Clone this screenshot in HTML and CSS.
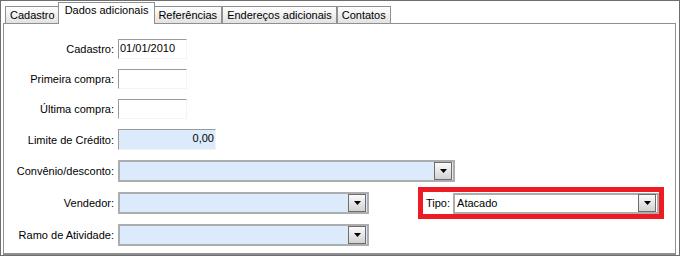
FILE: index.html
```html
<!DOCTYPE html>
<html lang="pt-BR">

<head>
  <meta charset="UTF-8">
  <meta name="viewport" content="width=device-width, initial-scale=1.0">
  <title>Dados adicionais</title>
  <link rel="stylesheet" href="styles.css">
</head>

<body>
  <div class="window">
    <div class="tabs">
      <div class="tab">Cadastro</div>
      <div class="tab active">Dados adicionais</div>
      <div class="tab">Referências</div>
      <div class="tab">Endereços adicionais</div>
      <div class="tab">Contatos</div>
    </div>

    <div class="panel">
      <div class="form">
        <div class="row">
          <label class="label">Cadastro:</label>
          <div class="edit">01/01/2010</div>
        </div>
        <div class="row">
          <label class="label">Primeira compra:</label>
          <div class="edit"></div>
        </div>
        <div class="row">
          <label class="label">Última compra:</label>
          <div class="edit"></div>
        </div>
        <div class="row row-money">
          <label class="label">Limite de Crédito:</label>
          <div class="edit money">0,00</div>
        </div>
        <div class="row row-combo">
          <label class="label">Convênio/desconto:</label>
          <div class="combo wide">
            <span class="combo-text"></span>
            <span class="drop"><svg width="7" height="4" viewBox="0 0 7 4"><polygon points="0,0 7,0 3.5,4" fill="#000"/></svg></span>
          </div>
        </div>
        <div class="row row-combo">
          <label class="label">Vendedor:</label>
          <div class="combo">
            <span class="combo-text"></span>
            <span class="drop"><svg width="7" height="4" viewBox="0 0 7 4"><polygon points="0,0 7,0 3.5,4" fill="#000"/></svg></span>
          </div>
          <!-- caixa em destaque -->
          <div class="tipo">
            <span class="tipo-label">Tipo:</span>
            <div class="combo white">
              <span class="combo-text">Atacado</span>
              <span class="drop"><svg width="7" height="4" viewBox="0 0 7 4"><polygon points="0,0 7,0 3.5,4" fill="#000"/></svg></span>
            </div>
          </div>
        </div>
        <div class="row row-combo">
          <label class="label">Ramo de Atividade:</label>
          <div class="combo">
            <span class="combo-text"></span>
            <span class="drop"><svg width="7" height="4" viewBox="0 0 7 4"><polygon points="0,0 7,0 3.5,4" fill="#000"/></svg></span>
          </div>
        </div>
      </div>
    </div>
  </div>
</body>

</html>
```

FILE: styles.css
```css
* {
  box-sizing: border-box;
}

body {
  margin: 0;
  font-family: "Liberation Sans", Arial, sans-serif;
  font-size: 11px;
  color: #000;
  background: #fff;
}

.window {
  width: 680px;
  height: 256px;
  border: 1px solid #6e6e6e;
  display: flex;
  flex-direction: column;
}

.tabs {
  display: flex;
  align-items: flex-end;
  height: 22px;
  padding-left: 4px;
}

.tab {
  height: 17px;
  padding: 0 4px;
  line-height: 16px;
  border: 1px solid #8e9192;
  border-bottom: none;
  background: linear-gradient(#fefefe, #e2e2e2);
  white-space: nowrap;
}

.tab.active {
  position: relative;
  height: 22px;
  margin: 0 -2px -1px;
  padding: 0 6px;
  line-height: 14px;
  background: #fff;
}

.panel {
  flex: 1;
  margin: 0 3px 0 2px;
  border: 1px solid #8f8f8f;
  border-bottom-width: 2px;
}

.form {
  display: flex;
  flex-direction: column;
  gap: 10px;
  padding-top: 15px;
}

.row {
  display: flex;
  align-items: center;
  height: 20px;
}

.row-money {
  height: 21px;
}

.row-combo {
  height: 22px;
}

.label {
  width: 110px;
  margin-right: 4px;
  text-align: right;
  white-space: nowrap;
}

.edit {
  width: 69px;
  height: 100%;
  padding: 2px 1px;
  line-height: 12px;
  border: 1px solid #f4f4f4;
  border-top-color: #9a9a9a;
  border-left-color: #9a9a9a;
}

.edit.money {
  width: 98px;
  text-align: right;
  background: #dcebfc;
}

.combo {
  display: flex;
  align-items: center;
  justify-content: space-between;
  width: 251px;
  height: 100%;
  padding: 0 1px 0 2px;
  border: 2px solid #adadad;
  background: #dcebfc;
}

.combo.wide {
  width: 337px;
}

.combo.white {
  width: 206px;
  height: 21px;
  background: #fff;
}

.combo-text {
  white-space: nowrap;
}

.drop {
  display: flex;
  align-items: center;
  justify-content: center;
  width: 18px;
  height: 18px;
  border: 1px solid #6c6c6c;
  background: linear-gradient(#fbfbfb, #d2d2d2);
}

.tipo {
  display: flex;
  align-items: center;
  width: 246px;
  height: 32px;
  margin-left: 49px;
  padding-left: 3px;
  border: 5px solid #ed1c24;
  background: #fff;
}

.tipo-label {
  margin-right: 3px;
}
```
